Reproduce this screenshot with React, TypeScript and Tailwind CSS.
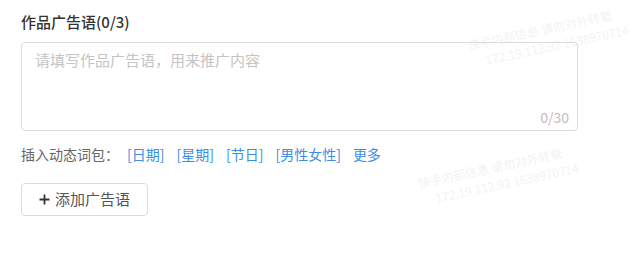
import React from "react";

const TAGS = ["[日期]", "[星期]", "[节日]", "[男性女性]"];

// faint screen watermark, kept to the blank areas
const WATERMARKS = [
  { x: 470, y: 36 },
  { x: 420, y: 174 },
];

export default function App() {
  return (
    <div
      className="relative h-[264px] w-[639px] overflow-hidden bg-white"
      style={{ fontFamily: '"PingFang SC", "Noto Sans CJK SC", "Liberation Sans", sans-serif' }}
    >
      {WATERMARKS.map((w, i) => (
        <div
          key={i}
          className="pointer-events-none absolute origin-left -rotate-[12deg] whitespace-nowrap text-[12px] leading-[18px] text-[#f3f3f3]"
          style={{ left: w.x, top: w.y }}
        >
          快手内部信息 请勿对外转载
          <br />
          <span className="pl-[14px]">172.19.112.92 1638970714</span>
        </div>
      ))}

      <div className="relative flex flex-col px-[21px] pt-[11px]">
        <div className="text-[15px] font-medium leading-[22px] text-[#333]">作品广告语(0/3)</div>

        <div className="relative mt-[9px] h-[89px] w-[557px] rounded border border-[#dcdcdc]">
          <div className="px-[13px] pt-[6px] text-[15px] leading-[22px] text-[#c4c4c4]">
            请填写作品广告语，用来推广内容
          </div>
          <div className="absolute bottom-[3px] right-[8px] text-[14px] leading-5 text-[#bdbdbd]">0/30</div>
        </div>

        <div className="mt-[12px] flex items-center text-[14px] leading-[22px]">
          <span className="mr-[8px] text-[#666]">插入动态词包：</span>
          {TAGS.map((t) => (
            <span key={t} className="mr-[12px] text-[#3a8ee6]">
              {t}
            </span>
          ))}
          <span className="text-[#3a8ee6]">更多</span>
        </div>

        <button className="mt-[18px] flex h-[33px] w-[127px] items-center justify-center gap-[5px] rounded border border-[#dcdcdc] bg-white text-[15px] text-[#555]">
          <svg width="11" height="11" viewBox="0 0 11 11">
            <path d="M5.5 0.5v10M0.5 5.5h10" stroke="#333" strokeWidth="1.8" />
          </svg>
          <span>添加广告语</span>
        </button>
      </div>
    </div>
  );
}
